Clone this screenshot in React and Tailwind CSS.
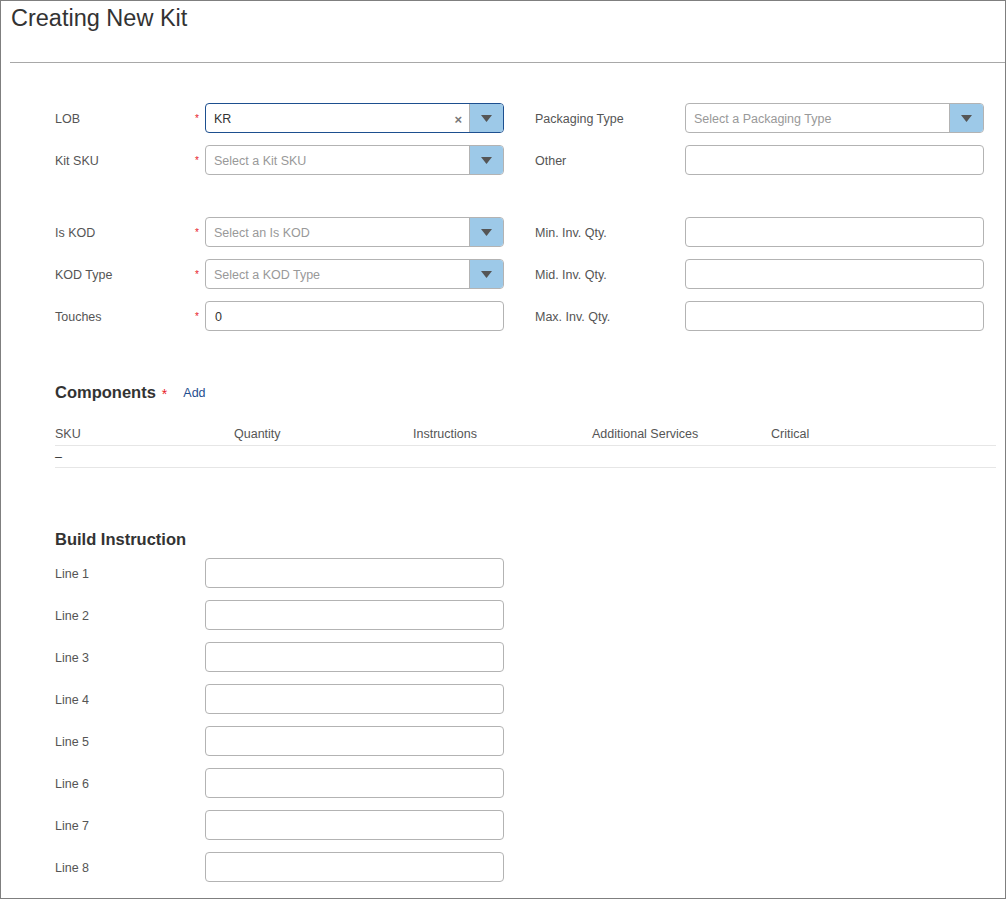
import React from 'react'

const font = { fontFamily: '"Liberation Sans", Arial, sans-serif' }

function Star() {
  return <span className="w-[10px] pt-[2px] text-[10px] leading-none text-[#e8202a] text-left">*</span>
}

function Arrow() {
  return (
    <svg width="11" height="7" viewBox="0 0 11 7">
      <path d="M0 0 L11 0 L5.5 7 Z" fill="#555" />
    </svg>
  )
}

function Select({ value, placeholder, focused }) {
  return (
    <div
      className={
        'w-[299px] h-[30px] flex rounded-[4px] border overflow-hidden bg-white ' +
        (focused ? 'border-[#1d4f8f]' : 'border-[#b3b3b3]')
      }
    >
      <div className="flex-1 flex items-center pl-[8px] pr-[7px] pt-[2px] text-[12.5px]">
        {value ? (
          <>
            <span className="flex-1 text-[#333]">{value}</span>
            <span className="text-[#777] text-[13px] font-bold leading-none">×</span>
          </>
        ) : (
          <span className="text-[#999]">{placeholder}</span>
        )}
      </div>
      <div className="w-[34px] bg-[#9dc9e8] border-l border-[#b3b3b3] flex items-center justify-center">
        <Arrow />
      </div>
    </div>
  )
}

function TextInput({ value }) {
  return (
    <div className="w-[299px] h-[30px] rounded-[4px] border border-[#b3b3b3] bg-white flex items-center pl-[9px] pt-[2px] text-[12.5px] text-[#333]">
      {value}
    </div>
  )
}

function LeftField({ label, required, children }) {
  return (
    <div className="flex items-center">
      <span className="w-[140px] pt-[2px] text-[12.5px] text-[#555]">{label}</span>
      {required ? <Star /> : <span className="w-[10px]" />}
      {children}
    </div>
  )
}

function RightField({ label, children }) {
  return (
    <div className="flex items-center ml-[31px]">
      <span className="w-[150px] pt-[2px] text-[12.5px] text-[#555]">{label}</span>
      {children}
    </div>
  )
}

export default function App() {
  const columns = ['SKU', 'Quantity', 'Instructions', 'Additional Services', 'Critical']
  const lines = [1, 2, 3, 4, 5, 6, 7, 8]

  return (
    <div style={font} className="w-[1006px] h-[899px] border border-[#7f7f7f] bg-white overflow-hidden">
      <h1 className="pl-[10px] pt-[4px] text-[23.5px] leading-[27px] text-[#333]">Creating New Kit</h1>
      <div className="ml-[9px] mt-[30px] border-t border-[#a8a8a8]" />

      <div className="pl-[54px]">
        <div className="mt-[40px] flex flex-col gap-[12px]">
          <div className="flex">
            <LeftField label="LOB" required>
              <Select value="KR" focused />
            </LeftField>
            <RightField label="Packaging Type">
              <Select placeholder="Select a Packaging Type" />
            </RightField>
          </div>
          <div className="flex">
            <LeftField label="Kit SKU" required>
              <Select placeholder="Select a Kit SKU" />
            </LeftField>
            <RightField label="Other">
              <TextInput />
            </RightField>
          </div>
        </div>

        <div className="mt-[42px] flex flex-col gap-[12px]">
          <div className="flex">
            <LeftField label="Is KOD" required>
              <Select placeholder="Select an Is KOD" />
            </LeftField>
            <RightField label="Min. Inv. Qty.">
              <TextInput />
            </RightField>
          </div>
          <div className="flex">
            <LeftField label="KOD Type" required>
              <Select placeholder="Select a KOD Type" />
            </LeftField>
            <RightField label="Mid. Inv. Qty.">
              <TextInput />
            </RightField>
          </div>
          <div className="flex">
            <LeftField label="Touches" required>
              <TextInput value="0" />
            </LeftField>
            <RightField label="Max. Inv. Qty.">
              <TextInput />
            </RightField>
          </div>
        </div>

        <div className="mt-[51px] flex items-center h-[20px]">
          <h2 className="text-[16.5px] font-bold text-[#333]">Components</h2>
          <span className="ml-[6px] pt-[3px] text-[14px] text-[#e8202a] leading-none">*</span>
          <span className="ml-[16px] pt-[2px] text-[12.5px] text-[#1f4e8f]">Add</span>
        </div>

        <div className="mr-[9px] mt-[19px]">
          <div className="grid grid-cols-[179px_179px_179px_179px_1fr] h-[25px] items-center pt-[2px] border-b border-[#e6e6e6] text-[12.5px] text-[#555]">
            {columns.map((c) => (
              <span key={c}>{c}</span>
            ))}
          </div>
          <div className="h-[22px] flex items-center pt-[2px] border-b border-[#e6e6e6] text-[12.5px] text-[#333]">–</div>
        </div>

        <h2 className="mt-[61px] h-[20px] flex items-center text-[16.5px] font-bold text-[#333]">Build Instruction</h2>

        <div className="mt-[9px] flex flex-col gap-[12px]">
          {lines.map((n) => (
            <div key={n} className="flex items-center">
              <span className="w-[150px] pt-[2px] text-[12.5px] text-[#555]">Line {n}</span>
              <TextInput />
            </div>
          ))}
        </div>
      </div>
    </div>
  )
}
